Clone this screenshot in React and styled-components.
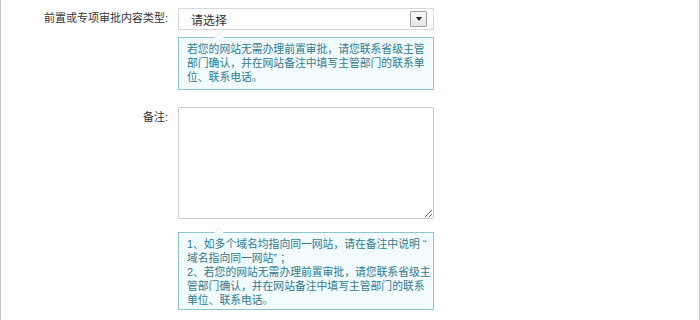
import styled, { createGlobalStyle } from 'styled-components'

const Global = createGlobalStyle`
  html, body { margin: 0; padding: 0; background: #fff; }
  body { font-family: "Liberation Sans", "Noto Sans CJK SC", sans-serif; }
`

const Page = styled.div`
  box-sizing: border-box;
  width: 700px;
  height: 320px;
  border-left: 1px solid #c8c8c8;
  border-right: 1px solid #c8c8c8;
  padding-top: 8px;
  overflow: hidden;
`

const Row = styled.div`
  display: flex;
  align-items: flex-start;
  margin-bottom: ${p => p.$gap || 0}px;
`

const Label = styled.div`
  width: 167px;
  text-align: right;
  font-size: 11px;
  line-height: 20px;
  color: #333;
  padding-right: 10px;
  flex-shrink: 0;
`

const Field = styled.div`
  width: 256px;
  display: flex;
  flex-direction: column;
`

const SelectBox = styled.div`
  box-sizing: border-box;
  height: 22px;
  border: 1px solid #d8d8d8;
  display: flex;
  align-items: center;
  justify-content: space-between;
  padding: 0 6px 0 12px;
  font-size: 12px;
  color: #333;
  background: #fff;
`

const DropBtn = styled.div`
  box-sizing: border-box;
  width: 17px;
  height: 16px;
  border: 1px solid #a0a0a0;
  border-radius: 1px;
  background: linear-gradient(#fbfbfb, #e4e4e4);
  display: flex;
  align-items: center;
  justify-content: center;
  &::after {
    content: '';
    border-left: 3px solid transparent;
    border-right: 3px solid transparent;
    border-top: 4px solid #222;
  }
`

const TextArea = styled.textarea`
  box-sizing: border-box;
  width: 256px;
  height: 112px;
  border: 1px solid #cacaca;
  border-radius: 2px;
  margin: 0;
  display: block;
  font-family: inherit;
  outline: none;
`

const Tip = styled.div`
  position: relative;
  box-sizing: border-box;
  margin-top: ${p => p.$top}px;
  border: 1px solid #8cc6cf;
  background: #f2fbfe;
  padding: ${p => p.$pad || '4px 8px 5px 8px'};
  font-size: 10.8px;
  line-height: 14px;
  color: #2f7a8e;
  &::before, &::after {
    content: '';
    position: absolute;
    left: 35px;
    border-left: 5px solid transparent;
    border-right: 5px solid transparent;
  }
  &::before {
    top: -6px;
    border-bottom: 6px solid #dde8ea;
  }
  &::after {
    top: -5px;
    border-bottom: 6px solid #fff;
  }
`

const Line = styled.span`
  display: block;
  white-space: nowrap;
`

export default function App() {
  return (
    <>
      <Global />
      <Page>
        <Row $gap={17}>
          <Label>前置或专项审批内容类型:</Label>
          <Field>
            <SelectBox>
              <span>请选择</span>
              <DropBtn />
            </SelectBox>
            <Tip $top={7}>
              <Line>若您的网站无需办理前置审批，请您联系省级主管</Line>
              <Line>部门确认，并在网站备注中填写主管部门的联系单</Line>
              <Line>位、联系电话。</Line>
            </Tip>
          </Field>
        </Row>
        <Row>
          <Label>备注:</Label>
          <Field>
            <TextArea />
            <Tip $top={13} $pad="4px 8px 2px 8px">
              <Line>1、如多个域名均指向同一网站，请在备注中说明 “</Line>
              <Line>域名指向同一网站” ；</Line>
              <Line>2、若您的网站无需办理前置审批，请您联系省级主</Line>
              <Line>管部门确认，并在网站备注中填写主管部门的联系</Line>
              <Line>单位、联系电话。</Line>
            </Tip>
          </Field>
        </Row>
      </Page>
    </>
  )
}
